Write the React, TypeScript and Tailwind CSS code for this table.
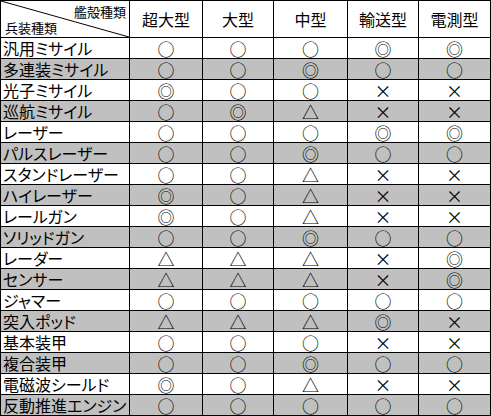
import React from 'react';

const cols = ['超大型', '大型', '中型', '輸送型', '電測型'];

const rows: [string, string[]][] = [
  ['汎用ミサイル', ['○', '○', '○', '◎', '◎']],
  ['多連装ミサイル', ['○', '○', '◎', '○', '○']],
  ['光子ミサイル', ['◎', '○', '○', '×', '×']],
  ['巡航ミサイル', ['○', '◎', '△', '×', '×']],
  ['レーザー', ['○', '○', '○', '◎', '◎']],
  ['パルスレーザー', ['○', '○', '◎', '○', '○']],
  ['スタンドレーザー', ['○', '○', '△', '×', '×']],
  ['ハイレーザー', ['◎', '○', '△', '×', '×']],
  ['レールガン', ['◎', '○', '△', '×', '×']],
  ['ソリッドガン', ['○', '○', '◎', '○', '○']],
  ['レーダー', ['△', '△', '△', '×', '◎']],
  ['センサー', ['△', '△', '△', '×', '◎']],
  ['ジャマー', ['○', '○', '○', '○', '○']],
  ['突入ポッド', ['△', '△', '△', '◎', '×']],
  ['基本装甲', ['○', '○', '○', '×', '×']],
  ['複合装甲', ['○', '○', '◎', '○', '○']],
  ['電磁波シールド', ['◎', '○', '△', '×', '×']],
  ['反動推進エンジン', ['○', '○', '○', '○', '○']],
];

const App = () => {
  return (
    <div className="w-[491px] h-[416px] bg-white font-['Noto_Sans_CJK_JP',sans-serif] text-black">
      <div className="grid grid-cols-[128px_72px_70px_73px_70px_71px] grid-rows-[36px_repeat(18,20px)] gap-px p-px bg-black">
        {/* corner cell */}
        <div className="relative bg-white text-[13px] leading-none">
          <svg className="absolute inset-0" width="128" height="36" viewBox="0 0 128 36">
            <line x1="0" y1="0" x2="128" y2="36" stroke="black" strokeWidth="1" />
          </svg>
          <div className="absolute right-[3px] top-[4px]">艦殻種類</div>
          <div className="absolute left-[4px] bottom-[3px]">兵装種類</div>
        </div>
        {cols.map((c) => (
          <div key={c} className="bg-white flex items-center justify-center text-[16px] leading-none">
            {c}
          </div>
        ))}

        {rows.map(([label, marks], i) => {
          const bg = i % 2 === 1 ? 'bg-[#c0c0c0]' : 'bg-white';
          return (
            <React.Fragment key={label}>
              <div className={`${bg} flex items-center pl-[2px] text-[16px] leading-none whitespace-nowrap [font-feature-settings:'palt']`}>
                {label}
              </div>
              {marks.map((m, j) => (
                <div key={j} className={`${bg} flex items-center justify-center text-[17px] leading-none`}>
                  {m}
                </div>
              ))}
            </React.Fragment>
          );
        })}
      </div>
    </div>
  );
};

export default App;
